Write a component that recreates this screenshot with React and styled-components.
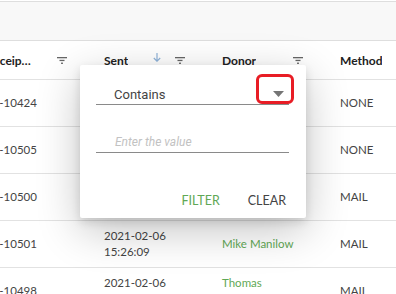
import React from "react";
import styled, { createGlobalStyle } from "styled-components";

const GlobalStyle = createGlobalStyle`
  body {
    margin: 0;
    background: #fff;
    font-family: Lato, "Open Sans", sans-serif;
  }
`;

const Page = styled.div`
  position: relative;
  width: 396px;
  height: 294px;
  overflow: hidden;
  background: #fff;
`;

const TopBar = styled.div`
  margin-top: 1px;
  height: 38px;
  background: #f8f8f8;
  border-top: 1px solid #dedede;
  border-bottom: 1px solid #dedede;
`;

const Table = styled.div`
  margin-left: -30px;
  width: 472px;
`;

const Row = styled.div`
  display: grid;
  grid-template-columns: repeat(4, 118px);
  height: ${p => (p.$header ? 38 : 46)}px;
  border-bottom: 1px solid #e2e2e2;
`;

const HeadCell = styled.div`
  display: flex;
  align-items: center;
  padding: 0 21px 0 16px;
  font-size: 12px;
  font-weight: 700;
  color: #222;
`;

const Title = styled.span`
  max-width: 46px;
  white-space: nowrap;
  overflow: hidden;
  text-overflow: ellipsis;
`;

const Icons = styled.div`
  display: flex;
  align-items: center;
  gap: 14px;
  margin-left: auto;
`;

const Cell = styled.div`
  display: flex;
  align-items: center;
  padding: 0 16px;
  font-size: 11.5px;
  line-height: 16px;
  color: ${p => (p.$link ? "#5fa855" : "#444")};
`;

const SortArrow = styled.svg`
  margin-bottom: 6px;
`;

const Popup = styled.div`
  position: absolute;
  left: 80px;
  top: 65px;
  width: 226px;
  height: 153px;
  box-sizing: border-box;
  padding: 19px 17px 0 16px;
  background: #fff;
  border-radius: 2px;
  box-shadow: 0 12px 44px rgba(0, 0, 0, 0.24), 0 4px 10px rgba(0, 0, 0, 0.12);
  display: flex;
  flex-direction: column;
  font-family: Roboto, sans-serif;
`;

const Select = styled.div`
  position: relative;
  display: flex;
  align-items: center;
  height: 20px;
  padding: 0 5px 0 18px;
  border-bottom: 1px solid #8a8a8a;
  font-size: 13px;
  color: #444;
`;

const SelectLabel = styled.span`
  flex: 1;
`;

const Marker = styled.div`
  position: absolute;
  left: 160px;
  top: -10px;
  width: 32px;
  height: 24px;
  border: 3.5px solid #e81d25;
  border-radius: 6px;
`;

const Input = styled.div`
  margin-top: 27px;
  height: 20px;
  padding-left: 19px;
  display: flex;
  align-items: center;
  border-bottom: 1px solid #8a8a8a;
  font-size: 12px;
  font-style: italic;
  color: #c2c2c2;
`;

const Buttons = styled.div`
  display: flex;
  justify-content: flex-end;
  gap: 20px;
  margin-top: 29px;
  margin-right: -1px;
`;

const Button = styled.button`
  height: 36px;
  padding: 0 4px;
  border: none;
  background: none;
  font-family: Lato, sans-serif;
  font-size: 12.5px;
  text-transform: uppercase;
  color: ${p => (p.$primary ? "#5fa855" : "#444")};
`;

const FilterIcon = () => (
  <svg width="10" height="7" viewBox="0 0 10 7" fill="#666">
    <rect x="0" y="0" width="10" height="1.3" />
    <rect x="2.5" y="2.8" width="5" height="1.3" />
    <rect x="4" y="5.6" width="2" height="1.3" />
  </svg>
);

const columns = [
  { title: "Receipt #" },
  { title: "Sent", sorted: true },
  { title: "Donor" },
  { title: "Method" },
];

const rows = [
  ["21-10424", ["2021-02-07", "09:12:44"], ["Anna Lee"], "NONE"],
  ["21-10505", ["2021-02-07", "08:40:02"], ["Paul Grant"], "NONE"],
  ["21-10500", ["2021-02-06", "18:03:51"], ["Sara Cole"], "MAIL"],
  ["21-10501", ["2021-02-06", "15:26:09"], ["Mike Manilow"], "MAIL"],
  ["21-10498", ["2021-02-06", "14:55:30"], ["Thomas", "Berg"], "MAIL"],
];

const Lines = ({ lines }) => (
  <div>
    {lines.map(l => (
      <div key={l}>{l}</div>
    ))}
  </div>
);

export default function App() {
  return (
    <Page>
      <GlobalStyle />
      <TopBar />
      <Table>
        <Row $header>
          {columns.map(c => (
            <HeadCell key={c.title}>
              <Title>{c.title}</Title>
              <Icons>
                {c.sorted && (
                  <SortArrow width="8" height="9" viewBox="0 0 8 9" fill="none" stroke="#8fb3d9" strokeWidth="1.2">
                    <path d="M4 0v8M0.8 5l3.2 3.2L7.2 5" />
                  </SortArrow>
                )}
                <FilterIcon />
              </Icons>
            </HeadCell>
          ))}
        </Row>
        {rows.map(r => (
          <Row key={r[0]}>
            <Cell>{r[0]}</Cell>
            <Cell>
              <Lines lines={r[1]} />
            </Cell>
            <Cell $link>
              <Lines lines={r[2]} />
            </Cell>
            <Cell>{r[3]}</Cell>
          </Row>
        ))}
      </Table>
      <Popup>
        <Select>
          <SelectLabel>Contains</SelectLabel>
          <svg width="11" height="6" viewBox="0 0 11 6">
            <path d="M0 0h11L5.5 6z" fill="#757575" />
          </svg>
          <Marker />
        </Select>
        <Input>Enter the value</Input>
        <Buttons>
          <Button $primary>Filter</Button>
          <Button>Clear</Button>
        </Buttons>
      </Popup>
    </Page>
  );
}
